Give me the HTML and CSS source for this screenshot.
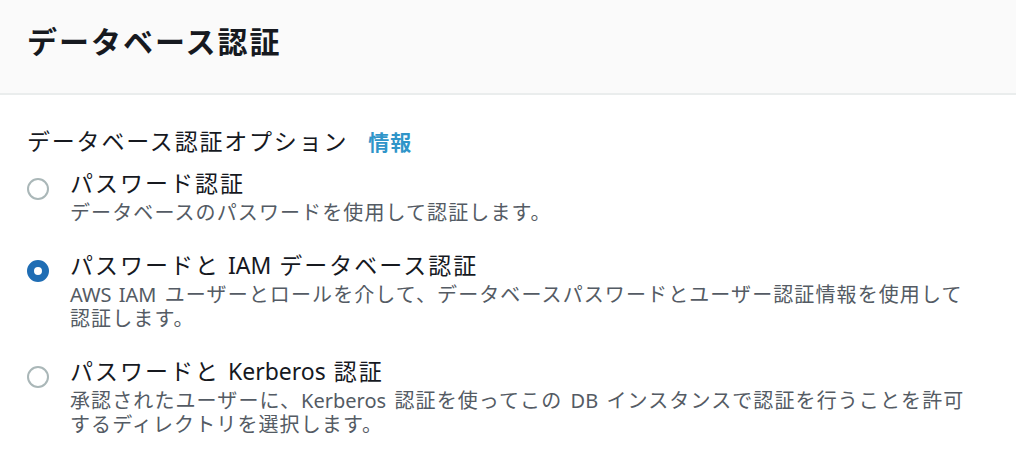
FILE: index.html
```html
<!DOCTYPE html>
<html lang="ja">
<head>
<meta charset="utf-8">
<link rel="stylesheet" href="styles.css">
</head>
<body>
<div class="panel">
  <div class="header">
    <h2 class="title">データベース認証</h2>
  </div>
  <div class="content">
    <div class="field-label">データベース認証オプション<a class="info">情報</a></div>
    <div class="options">
      <label class="option">
        <span class="radio"></span>
        <span class="text">
          <span class="opt-label">パスワード認証</span>
          <span class="opt-desc">データベースのパスワードを使用して認証します。</span>
        </span>
      </label>
      <label class="option">
        <span class="radio checked"></span>
        <span class="text">
          <span class="opt-label">パスワードと <span class="latin">IAM</span> データベース認証</span>
          <span class="opt-desc"><span class="latin">AWS IAM</span> ユーザーとロールを介して、データベースパスワードとユーザー認証情報を使用して認証します。</span>
        </span>
      </label>
      <label class="option">
        <span class="radio"></span>
        <span class="text">
          <span class="opt-label">パスワードと <span class="latin">Kerberos</span> 認証</span>
          <span class="opt-desc">承認されたユーザーに、<span class="latin">Kerberos</span> 認証を使ってこの <span class="latin">DB</span> インスタンスで認証を行うことを許可するディレクトリを選択します。</span>
        </span>
      </label>
    </div>
  </div>
</div>
</body>
</html>
```
FILE: styles.css
```css
html, body {
  margin: 0;
  padding: 0;
  background: #ffffff;
}
body {
  font-family: "Noto Sans", "Noto Sans CJK JP", sans-serif;
  color: #16191f;
}
.panel {
  width: 1016px;
}
.header {
  background: #fafafa;
  height: 95px;
  border-bottom: 2px solid #eaeded;
  box-sizing: border-box;
  display: flex;
  align-items: center;
  padding: 0 27px 10px;
}
.title {
  margin: 0;
  font-size: 30px;
  letter-spacing: 2px;
  font-weight: 700;
  line-height: 36px;
  color: #16191f;
}
.content {
  padding: 32px 41px 0 27px;
}
.field-label {
  font-size: 23px;
  letter-spacing: 1.8px;
  line-height: 28px;
  color: #16191f;
}
.info {
  color: #2f95c9;
  font-weight: 700;
  font-size: 21px;
  letter-spacing: 1px;
  margin-left: 20px;
}
.options {
  display: flex;
  flex-direction: column;
  gap: 26px;
  margin-top: 13px;
}
.option {
  display: flex;
  gap: 21px;
}
.radio {
  flex: none;
  width: 22px;
  height: 22px;
  box-sizing: border-box;
  border-radius: 50%;
  border: 2px solid #aab7b8;
  margin-top: 9px;
  background: #fff;
}
.radio.checked {
  border: 7px solid #1f6db4;
}
.text {
  display: flex;
  flex-direction: column;
  gap: 4px;
}
.opt-label {
  font-size: 23px;
  letter-spacing: 2px;
  line-height: 28px;
  color: #16191f;
}
.opt-desc {
  font-size: 20px;
  letter-spacing: 1.1px;
  word-spacing: 2px;
  line-height: 24px;
  color: #545b64;
}
.latin {
  letter-spacing: 0;
}
```
